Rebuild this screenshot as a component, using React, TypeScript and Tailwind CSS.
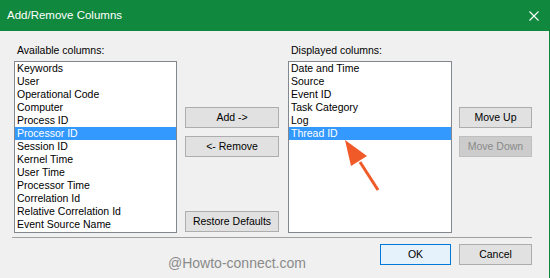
import type { ReactNode } from "react";

const available = [
  "Keywords",
  "User",
  "Operational Code",
  "Computer",
  "Process ID",
  "Processor ID",
  "Session ID",
  "Kernel Time",
  "User Time",
  "Processor Time",
  "Correlation Id",
  "Relative Correlation Id",
  "Event Source Name",
];

const displayed = ["Date and Time", "Source", "Event ID", "Task Category", "Log", "Thread ID"];

function Btn({
  children,
  className = "",
  disabled = false,
}: {
  children: ReactNode;
  className?: string;
  disabled?: boolean;
}) {
  return (
    <button
      type="button"
      className={
        "flex h-[21px] items-center justify-center border text-[10.5px] leading-none " +
        (disabled
          ? "border-[#bfbfbf] bg-[#cccccc] text-[#8a8a8a] "
          : "border-[#adadad] bg-[#e1e1e1] text-black ") +
        className
      }
    >
      {children}
    </button>
  );
}

function ListBox({ items, selected }: { items: string[]; selected: number }) {
  return (
    <div className="h-[172px] border border-[#828790] bg-white">
      {items.map((item, i) => (
        <div
          key={item}
          className={
            "h-[13px] pl-[2px] text-[10.5px] leading-[13px] whitespace-nowrap " +
            (i === selected ? "bg-[#3399ff] text-white" : "text-black")
          }
        >
          {item}
        </div>
      ))}
    </div>
  );
}

export default function App() {
  return (
    <div className="relative flex h-[278px] w-[550px] flex-col overflow-hidden border-r border-[#10893e] bg-[#f0f0f0] font-['Liberation_Sans',Arial,sans-serif]">
      {/* title bar */}
      <div className="flex h-[31px] shrink-0 items-center justify-between bg-[#10893e] pl-[7px] pr-[10px]">
        <span className="text-[11.5px] text-white">Add/Remove Columns</span>
        <svg width="10" height="10" viewBox="0 0 10 10">
          <path d="M0.5 0.5 L9.5 9.5 M9.5 0.5 L0.5 9.5" stroke="white" strokeWidth="1.1" />
        </svg>
      </div>

      <div className="flex px-[14px] pt-[13px]">
        <div className="w-[163px]">
          <div className="mb-[4px] h-[13px] pl-[3px] text-[10.5px] leading-[13px] text-black">
            Available columns:
          </div>
          <ListBox items={available} selected={5} />
        </div>

        <div className="ml-[8px] flex w-[94px] flex-col pt-[63px] pb-[1px]">
          <Btn>Add -&gt;</Btn>
          <Btn className="mt-[8px]">&lt;- Remove</Btn>
          <Btn className="mt-auto">Restore Defaults</Btn>
        </div>

        <div className="ml-[9px] w-[164px]">
          <div className="mb-[4px] h-[13px] pl-[3px] text-[10.5px] leading-[13px] text-black">
            Displayed columns:
          </div>
          <ListBox items={displayed} selected={5} />
        </div>

        <div className="ml-[7px] flex w-[73px] flex-col pt-[63px]">
          <Btn>Move Up</Btn>
          <Btn className="mt-[8px]" disabled>
            Move Down
          </Btn>
        </div>
      </div>

      <div className="mx-[12px] mt-[4px] h-px w-[520px] bg-[#a0a0a0]" />

      <div className="mt-[6px] flex justify-end gap-[8px] pr-[17px]">
        <button
          type="button"
          className="flex h-[21px] w-[71px] items-center justify-center border border-[#0078d7] bg-[#e5f1fb] text-[10.5px] leading-none text-black"
        >
          OK
        </button>
        <Btn className="w-[73px]">Cancel</Btn>
      </div>

      {/* watermark */}
      <div className="absolute left-[168px] top-[255px] text-[14px] leading-[16px] text-[#8a8a8a]">
        @Howto-connect.com
      </div>

      {/* annotation arrow */}
      <svg className="pointer-events-none absolute left-0 top-0" width="550" height="278">
        <line x1="378" y1="190" x2="360" y2="162" stroke="#f05a28" strokeWidth="3" />
        <polygon points="345,140 351,166 367,156" fill="#f05a28" />
      </svg>
    </div>
  );
}
